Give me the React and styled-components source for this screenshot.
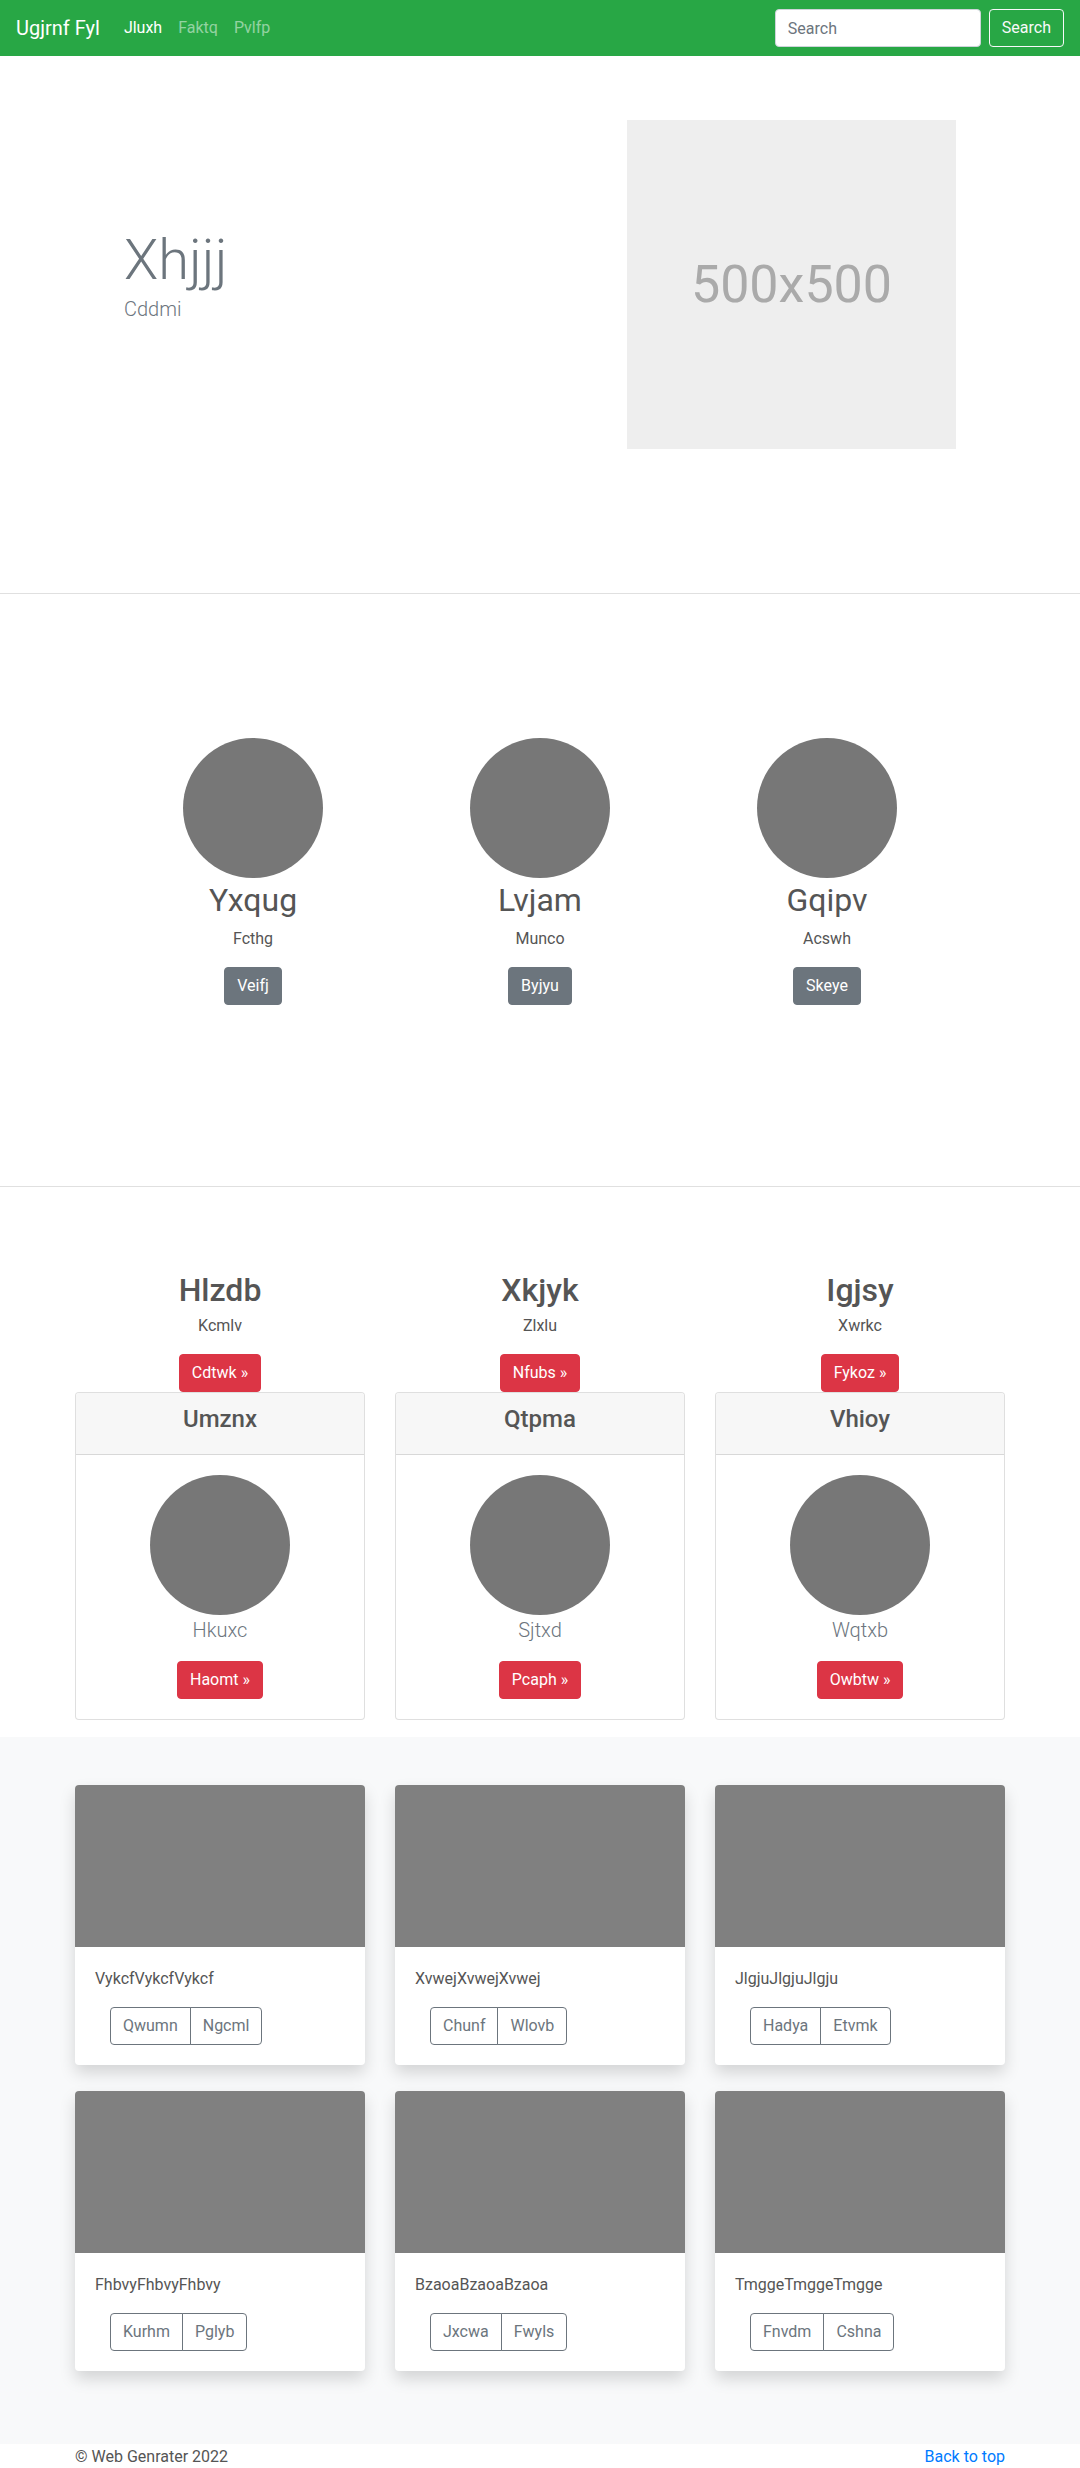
import React from 'react'
import styled, { createGlobalStyle } from 'styled-components'

const GlobalStyle = createGlobalStyle`
  body {
    margin: 0;
    font-family: Roboto, "Liberation Sans", Arial, sans-serif;
    font-size: 16px;
    line-height: 1.5;
    color: #555;
    background: #fff;
  }
  * { box-sizing: border-box; }
`

const NavBar = styled.nav`
  display: flex;
  align-items: center;
  height: 56px;
  padding: 0 16px;
  background: #28a745;
`
const Brand = styled.a`
  font-size: 20px;
  line-height: 30px;
  color: #fff;
  margin-right: 16px;
  text-decoration: none;
`
const NavLinks = styled.div`
  display: flex;
`
const NavLink = styled.a`
  padding: 8px;
  color: ${p => (p.$active ? '#fff' : 'rgba(255, 255, 255, 0.5)')};
  text-decoration: none;
`
const SearchForm = styled.form`
  margin-left: auto;
  display: flex;
  gap: 8px;
`
const SearchInput = styled.input`
  width: 206px;
  height: 38px;
  padding: 6px 12px;
  font: inherit;
  color: #495057;
  border: 1px solid #ced4da;
  border-radius: 4px;
  background: #fff;
  &::placeholder { color: #6c757d; }
`
const OutlineLight = styled.button`
  height: 38px;
  padding: 0 12px;
  font: inherit;
  color: #f8f9fa;
  background: transparent;
  border: 1px solid #f8f9fa;
  border-radius: 4px;
`

const Hero = styled.section`
  padding: 64px 0 144px;
  border-bottom: 1px solid #e0e0e0;
`
const HeroInner = styled.div`
  width: 960px;
  margin: 0 auto;
  padding: 0 64px;
  display: grid;
  grid-template-columns: 1fr 329px;
`
const HeroText = styled.div`
  margin-top: 107px;
`
const Display = styled.h1`
  margin: 0;
  font-size: 56px;
  font-weight: 300;
  line-height: 1.2;
  color: #6c757d;
`
const Lead = styled.p`
  margin: 0 0 16px;
  font-size: 20px;
  font-weight: 300;
  line-height: 30px;
  color: #6c757d;
`
const Placeholder = styled.div`
  width: 329px;
  height: 329px;
  background: #eee;
  color: #aaa;
  font-size: 52px;
  display: flex;
  align-items: center;
  justify-content: center;
`

const Marketing = styled.section`
  padding: 144px 0 181px;
  border-bottom: 1px solid #e0e0e0;
`
const MarketingRow = styled.div`
  width: 861px;
  margin: 0 auto;
  display: grid;
  grid-template-columns: repeat(3, 1fr);
`
const Col = styled.div`
  display: flex;
  flex-direction: column;
  align-items: center;
  text-align: center;
`
const Circle = styled.div`
  width: 140px;
  height: 140px;
  border-radius: 50%;
  background: #777;
  flex-shrink: 0;
`
const Heading = styled.h2`
  margin: 0 0 ${p => (p.$weight ? 4 : 8)}px;
  padding-top: ${p => (p.$weight ? 4 : 3)}px;
  font-size: 32px;
  font-weight: ${p => p.$weight || 400};
  line-height: 1.2;
`
const Text = styled.p`
  margin: 0 0 16px;
`
const Btn = styled.button`
  padding: 6px 12px;
  font: inherit;
  line-height: 24px;
  color: #fff;
  background: ${p => (p.$variant === 'danger' ? '#dc3545' : '#6c757d')};
  border: 1px solid ${p => (p.$variant === 'danger' ? '#dc3545' : '#6c757d')};
  border-radius: 4px;
`

const Pricing = styled.section`
  padding: 80px 0 17px;
`
const Container = styled.div`
  width: 930px;
  margin: 0 auto;
  display: grid;
  grid-template-columns: repeat(3, 1fr);
  column-gap: 30px;
  row-gap: ${p => p.$rowGap || 0}px;
`
const PriceCol = styled.div`
  text-align: center;
`
const Card = styled.div`
  border: 1px solid rgba(0, 0, 0, 0.125);
  border-radius: 4px;
  background: #fff;
`
const CardHeader = styled.div`
  padding: 12px 20px;
  background: #f7f7f7;
  border-bottom: 1px solid rgba(0, 0, 0, 0.125);
  border-radius: 3px 3px 0 0;
`
const CardTitle = styled.h4`
  margin: 0 0 8px;
  font-size: 24px;
  font-weight: 500;
  line-height: 1.2;
`
const CardBody = styled.div`
  padding: 20px;
  display: flex;
  flex-direction: column;
  align-items: center;
`

const Album = styled.section`
  background: #f8f9fa;
  padding: 48px 0 73px;
`
const AlbumCard = styled.div`
  background: #fff;
  border-radius: 4px;
  box-shadow: 0 8px 16px rgba(0, 0, 0, 0.15);
  overflow: hidden;
`
const Thumb = styled.div`
  height: 162px;
  background: #808080;
`
const AlbumBody = styled.div`
  padding: 20px;
`
const BtnGroup = styled.div`
  display: inline-flex;
  margin-left: 15px;
`
const OutlineBtn = styled.button`
  padding: 6px 12px;
  font: inherit;
  line-height: 24px;
  color: #6c757d;
  background: transparent;
  border: 1px solid #6c757d;
  border-radius: 0;
  &:first-child { border-radius: 4px 0 0 4px; }
  &:last-child { border-radius: 0 4px 4px 0; margin-left: -1px; }
`

const Footer = styled.footer`
  width: 930px;
  margin: 0 auto;
  padding-top: 1px;
  display: flex;
  justify-content: space-between;
  color: #555;
`
const TopLink = styled.a`
  color: #007bff;
  text-decoration: none;
`

const features = [
  ['Yxqug', 'Fcthg', 'Veifj'],
  ['Lvjam', 'Munco', 'Byjyu'],
  ['Gqipv', 'Acswh', 'Skeye'],
]

const plans = [
  ['Hlzdb', 'Kcmlv', 'Cdtwk', 'Umznx', 'Hkuxc', 'Haomt'],
  ['Xkjyk', 'Zlxlu', 'Nfubs', 'Qtpma', 'Sjtxd', 'Pcaph'],
  ['Igjsy', 'Xwrkc', 'Fykoz', 'Vhioy', 'Wqtxb', 'Owbtw'],
]

const albums = [
  ['VykcfVykcfVykcf', 'Qwumn', 'Ngcml'],
  ['XvwejXvwejXvwej', 'Chunf', 'Wlovb'],
  ['JlgjuJlgjuJlgju', 'Hadya', 'Etvmk'],
  ['FhbvyFhbvyFhbvy', 'Kurhm', 'Pglyb'],
  ['BzaoaBzaoaBzaoa', 'Jxcwa', 'Fwyls'],
  ['TmggeTmggeTmgge', 'Fnvdm', 'Cshna'],
]

export default function App() {
  return (
    <>
      <GlobalStyle />
      <NavBar>
        <Brand href="#">Ugjrnf Fyl</Brand>
        <NavLinks>
          <NavLink href="#" $active>Jluxh</NavLink>
          <NavLink href="#">Faktq</NavLink>
          <NavLink href="#">Pvlfp</NavLink>
        </NavLinks>
        <SearchForm onSubmit={e => e.preventDefault()}>
          <SearchInput placeholder="Search" />
          <OutlineLight>Search</OutlineLight>
        </SearchForm>
      </NavBar>

      <Hero>
        <HeroInner>
          <HeroText>
            <Display>Xhjjj</Display>
            <Lead>Cddmi</Lead>
          </HeroText>
          <Placeholder>500x500</Placeholder>
        </HeroInner>
      </Hero>

      <Marketing>
        <MarketingRow>
          {features.map(([name, sub, btn]) => (
            <Col key={name}>
              <Circle />
              <Heading>{name}</Heading>
              <Text>{sub}</Text>
              <Btn>{btn}</Btn>
            </Col>
          ))}
        </MarketingRow>
      </Marketing>

      <Pricing>
        <Container>
          {plans.map(([title, sub, btn, head, lead, action]) => (
            <PriceCol key={title}>
              <Heading $weight={500}>{title}</Heading>
              <Text>{sub}</Text>
              <Btn $variant="danger">{btn} »</Btn>
              <Card>
                <CardHeader>
                  <CardTitle>{head}</CardTitle>
                </CardHeader>
                <CardBody>
                  <Circle />
                  <Lead>{lead}</Lead>
                  <Btn $variant="danger">{action} »</Btn>
                </CardBody>
              </Card>
            </PriceCol>
          ))}
        </Container>
      </Pricing>

      <Album>
        <Container $rowGap={26}>
          {albums.map(([text, a, b]) => (
            <AlbumCard key={text}>
              <Thumb />
              <AlbumBody>
                <Text>{text}</Text>
                <BtnGroup>
                  <OutlineBtn>{a}</OutlineBtn>
                  <OutlineBtn>{b}</OutlineBtn>
                </BtnGroup>
              </AlbumBody>
            </AlbumCard>
          ))}
        </Container>
      </Album>

      <Footer>
        <span>© Web Genrater 2022</span>
        <TopLink href="#">Back to top</TopLink>
      </Footer>
    </>
  )
}
